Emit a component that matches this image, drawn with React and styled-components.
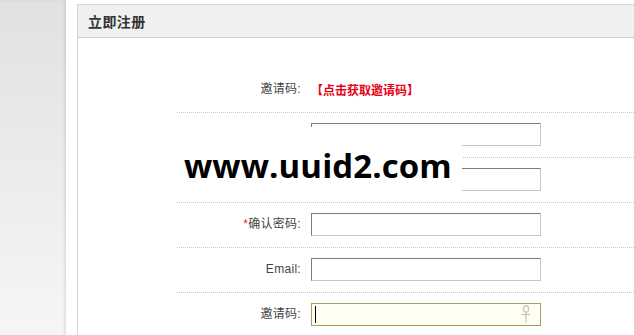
import React from "react";
import styled, { createGlobalStyle } from "styled-components";

const Global = createGlobalStyle`
  html, body { margin: 0; padding: 0; background: #fff; }
  body { font-family: "Liberation Sans", "Noto Sans CJK SC", sans-serif; }
  * { box-sizing: border-box; }
`;

const Page = styled.div`
  position: relative;
  display: flex;
  width: 634px;
  height: 335px;
  overflow: hidden;
  background: #fff;
`;

const SideBar = styled.div`
  width: 66px;
  flex: none;
  background: linear-gradient(#e1e1e1, #f6f6f6);
  box-shadow: inset -2px 0 2px rgba(0, 0, 0, 0.08);
`;

const Panel = styled.div`
  flex: 1;
  margin: 4px 0 0 11px;
  border-top: 1px solid #d6d6d6;
  border-left: 1px solid #d6d6d6;
  display: flex;
  flex-direction: column;
`;

const Header = styled.div`
  height: 33px;
  background: #f0f0f0;
  border-bottom: 1px solid #cdcdcd;
  padding-left: 10px;
  font-family: "Noto Sans CJK SC", sans-serif;
  font-weight: 700;
  font-size: 14px;
  letter-spacing: 0.4px;
  line-height: 32px;
  color: #333;
`;

const Form = styled.div`
  padding: 30px 0 0 99px;
  display: flex;
  flex-direction: column;
`;

const Row = styled.div`
  display: flex;
  align-items: center;
  padding: 10px 0 11px;
  border-top: ${(p) => (p.$first ? "none" : "1px dotted #c8c8c8")};
`;

const Label = styled.div`
  width: 124px;
  flex: none;
  text-align: right;
  font-size: 12px;
  letter-spacing: 0.3px;
  color: #444;
  line-height: 23px;
  margin-right: 10px;
`;

const Star = styled.span`
  color: #e03030;
`;

const RedLink = styled.span`
  font-family: "Noto Sans CJK SC", sans-serif;
  font-weight: 700;
  font-size: 12px;
  color: #e60012;
  line-height: 23px;
`;

const InputBox = styled.div`
  position: relative;
  width: 230px;
  height: 23px;
  border: 1px solid;
  border-color: ${(p) =>
    p.$focused ? "#a99d5f" : "#7d7d7d #c6c6c6 #c6c6c6 #7d7d7d"};
  background: ${(p) => (p.$focused ? "#fffef2" : "#fff")};
`;

const Caret = styled.span`
  position: absolute;
  left: 3px;
  top: 2px;
  width: 1px;
  height: 17px;
  background: #000;
`;

const KeyIcon = styled.svg`
  position: absolute;
  right: 9px;
  top: 1px;
`;

const Watermark = styled.div`
  position: absolute;
  left: 177px;
  top: 127px;
  width: 285px;
  height: 66px;
  background: #fff;
  padding: 22px 0 0 7px;
  font-family: "Open Sans", sans-serif;
  font-weight: 700;
  font-size: 33px;
  line-height: 33px;
  color: #000;
  letter-spacing: 0.1px;
  white-space: nowrap;
`;

const rows = [
  { id: "user", label: "", star: false },
  { id: "pass", label: "", star: false },
  { id: "confirm", label: "确认密码:", star: true },
  { id: "email", label: "Email:" },
];

export default function App() {
  return (
    <>
      <Global />
      <Page>
        <SideBar />
        <Panel>
          <Header>立即注册</Header>
          <Form>
            <Row $first>
              <Label>邀请码:</Label>
              <RedLink>【点击获取邀请码】</RedLink>
            </Row>
            {rows.map((r) => (
              <Row key={r.id}>
                <Label>
                  {r.star && <Star>*</Star>}
                  {r.label}
                </Label>
                <InputBox />
              </Row>
            ))}
            <Row>
              <Label>邀请码:</Label>
              <InputBox $focused>
                <Caret />
                <KeyIcon width="10" height="19" viewBox="0 0 10 19">
                  <g fill="none" stroke="#c4c2b4" strokeWidth="1.2">
                    <ellipse cx="5" cy="4" rx="2.6" ry="3.2" />
                    <line x1="5" y1="7.2" x2="5" y2="18" />
                    <line x1="1" y1="9.5" x2="9" y2="9.5" />
                  </g>
                </KeyIcon>
              </InputBox>
            </Row>
          </Form>
        </Panel>
        <Watermark>www.uuid2.com</Watermark>
      </Page>
    </>
  );
}
